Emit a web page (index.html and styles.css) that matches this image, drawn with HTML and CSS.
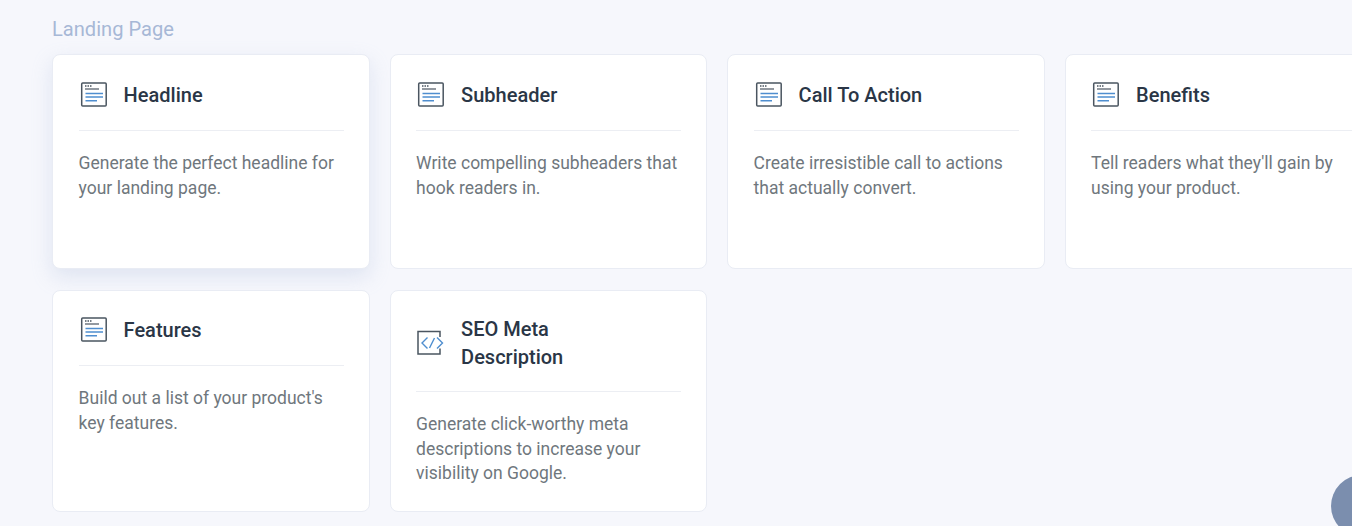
FILE: index.html
```html
<!DOCTYPE html>
<html lang="en">
<head>
<meta charset="utf-8">
<title>Landing Page</title>
<link rel="stylesheet" href="styles.css">
</head>
<body>
<main class="page">
  <h2 class="section-title">Landing Page</h2>
  <div class="grid">
    <article class="card card-hover">
      <header class="card-head">
        <svg class="icon" viewBox="0 0 27 26" aria-hidden="true"><rect x="1.700" y="1" width="24.500" height="23" rx="1" fill="none" stroke="#4a5560" stroke-width="1.500"/><path d="M5 7H19" stroke="#4a5560" stroke-width="1.200"/><path d="M5 4h1.500M7.500 4h1.500M10 4h1.500" stroke="#4a5560" stroke-width="1.300"/><path d="M5.500 11.500H23M5.500 15H23M5.500 18.800H17" stroke="#4f8ecf" stroke-width="1.400"/></svg>
        <h3 class="card-title">Headline</h3>
      </header>
      <p class="card-text">Generate the perfect headline for your landing page.</p>
    </article>
    <article class="card">
      <header class="card-head">
        <svg class="icon" viewBox="0 0 27 26" aria-hidden="true"><rect x="1.700" y="1" width="24.500" height="23" rx="1" fill="none" stroke="#4a5560" stroke-width="1.500"/><path d="M5 7H19" stroke="#4a5560" stroke-width="1.200"/><path d="M5 4h1.500M7.500 4h1.500M10 4h1.500" stroke="#4a5560" stroke-width="1.300"/><path d="M5.500 11.500H23M5.500 15H23M5.500 18.800H17" stroke="#4f8ecf" stroke-width="1.400"/></svg>
        <h3 class="card-title">Subheader</h3>
      </header>
      <p class="card-text">Write compelling subheaders that hook readers in.</p>
    </article>
    <article class="card">
      <header class="card-head">
        <svg class="icon" viewBox="0 0 27 26" aria-hidden="true"><rect x="1.700" y="1" width="24.500" height="23" rx="1" fill="none" stroke="#4a5560" stroke-width="1.500"/><path d="M5 7H19" stroke="#4a5560" stroke-width="1.200"/><path d="M5 4h1.500M7.500 4h1.500M10 4h1.500" stroke="#4a5560" stroke-width="1.300"/><path d="M5.500 11.500H23M5.500 15H23M5.500 18.800H17" stroke="#4f8ecf" stroke-width="1.400"/></svg>
        <h3 class="card-title">Call To Action</h3>
      </header>
      <p class="card-text">Create irresistible call to actions that actually convert.</p>
    </article>
    <article class="card">
      <header class="card-head">
        <svg class="icon" viewBox="0 0 27 26" aria-hidden="true"><rect x="1.700" y="1" width="24.500" height="23" rx="1" fill="none" stroke="#4a5560" stroke-width="1.500"/><path d="M5 7H19" stroke="#4a5560" stroke-width="1.200"/><path d="M5 4h1.500M7.500 4h1.500M10 4h1.500" stroke="#4a5560" stroke-width="1.300"/><path d="M5.500 11.500H23M5.500 15H23M5.500 18.800H17" stroke="#4f8ecf" stroke-width="1.400"/></svg>
        <h3 class="card-title">Benefits</h3>
      </header>
      <p class="card-text">Tell readers what they'll gain by using your product.</p>
    </article>
    <article class="card">
      <header class="card-head">
        <svg class="icon" viewBox="0 0 27 26" aria-hidden="true"><rect x="1.700" y="1" width="24.500" height="23" rx="1" fill="none" stroke="#4a5560" stroke-width="1.500"/><path d="M5 7H19" stroke="#4a5560" stroke-width="1.200"/><path d="M5 4h1.500M7.500 4h1.500M10 4h1.500" stroke="#4a5560" stroke-width="1.300"/><path d="M5.500 11.500H23M5.500 15H23M5.500 18.800H17" stroke="#4f8ecf" stroke-width="1.400"/></svg>
        <h3 class="card-title">Features</h3>
      </header>
      <p class="card-text">Build out a list of your product's key features.</p>
    </article>
    <article class="card">
      <header class="card-head">
        <svg class="icon" viewBox="0 0 27 26" aria-hidden="true"><path d="M23 7V1.500H1V24H23V18.500" fill="none" stroke="#4a5560" stroke-width="1.500"/><path d="M10.500 7.500L5 13l5.500 5.500M20 7.500L25.500 13 20 18.500M17.500 8L12.500 18" fill="none" stroke="#4f8ecf" stroke-width="1.400"/></svg>
        <h3 class="card-title">SEO Meta<br>Description</h3>
      </header>
      <p class="card-text">Generate click-worthy meta descriptions to increase your visibility on Google.</p>
    </article>
  </div>
</main>
<div class="help-bubble"></div>
</body>
</html>
```
FILE: styles.css
```css
* { box-sizing: border-box; }
html, body { height: 100%; }
body {
  margin: 0;
  background: #f6f7fc;
  font-family: Roboto, "Liberation Sans", sans-serif;
  overflow: hidden;
}
.page { padding: 15px 0 0 52px; width: 1400px; }
.section-title {
  margin: 0 0 11px;
  font-size: 20.100px;
  line-height: 28px;
  font-weight: 400;
  color: #a7b8d6;
}
.grid {
  display: grid;
  grid-template-columns: repeat(4, 317.5px);
  gap: 21px 20px;
}
.card {
  min-height: 214.500px;
  padding: 24.400px 25px 25px 25.600px;
  background: #fff;
  border: 1px solid #e9ecf4;
  border-radius: 8px;
}
.card-hover { box-shadow: 0 8px 20px rgba(170, 185, 220, 0.3); }
.card-head {
  display: flex;
  align-items: center;
  min-height: 51.500px;
  padding-bottom: 20px;
  border-bottom: 1px solid #eceef3;
}
.icon { flex: none; width: 27px; height: 26px; margin-right: 17px; margin-left: 1px; }
.card-title {
  margin: 0;
  font-size: 20px;
  line-height: 28px;
  font-weight: 500;
  color: #2a3646;
}
.card-text {
  margin: 20px 0 0;
  font-size: 17.500px;
  line-height: 24.700px;
  color: #6f777d;
}
.help-bubble {
  position: fixed;
  left: 1331px;
  top: 475px;
  width: 62px;
  height: 62px;
  border-radius: 50%;
  background: #7b8eae;
}
```
